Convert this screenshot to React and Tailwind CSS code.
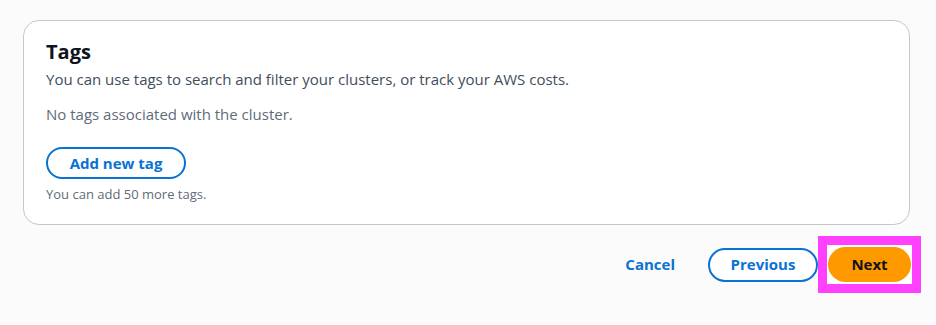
export default function App() {
  return (
    <div className="min-h-[325px] w-[936px] bg-[#fbfbfb] pt-5 font-['Open_Sans',sans-serif]">
      <div className="ml-[23px] mr-[26px] h-[205px] rounded-2xl border border-[#c6c6cd] bg-white px-[22px] pt-[18px]">
        <h2 className="text-[20px] font-bold leading-[26px] text-[#0f141a]">Tags</h2>
        <p className="mt-[4px] text-[15px] leading-[20px] text-[#414d5c]">
          You can use tags to search and filter your clusters, or track your AWS costs.
        </p>
        <p className="mt-[15px] text-[15px] leading-[20px] text-[#5f6b7a]">No tags associated with the cluster.</p>
        <button className="mt-[23px] flex h-8 w-[140px] items-center justify-center rounded-full border-2 border-[#0972d3] text-[15px] font-bold text-[#0972d3]">
          Add new tag
        </button>
        <p className="mt-[7px] text-[13px] leading-[16px] text-[#5f6b7a]">You can add 50 more tags.</p>
      </div>
      <div className="mt-[11px] flex items-center justify-end pr-[15px]">
        <button className="mr-[33px] text-[15px] font-bold text-[#0972d3]">Cancel</button>
        <button className="flex h-[34px] w-[110px] items-center justify-center rounded-full border-2 border-[#0972d3] bg-white text-[15px] font-bold text-[#0972d3]">
          Previous
        </button>
        <div className="border-[9px] border-[#ff40ff] bg-white px-[1px] py-[2px]">
          <button className="flex h-[35px] w-[83px] items-center justify-center rounded-full bg-[#ff9900] text-[15px] font-bold text-[#0f141a]">
            Next
          </button>
        </div>
      </div>
    </div>
  )
}
